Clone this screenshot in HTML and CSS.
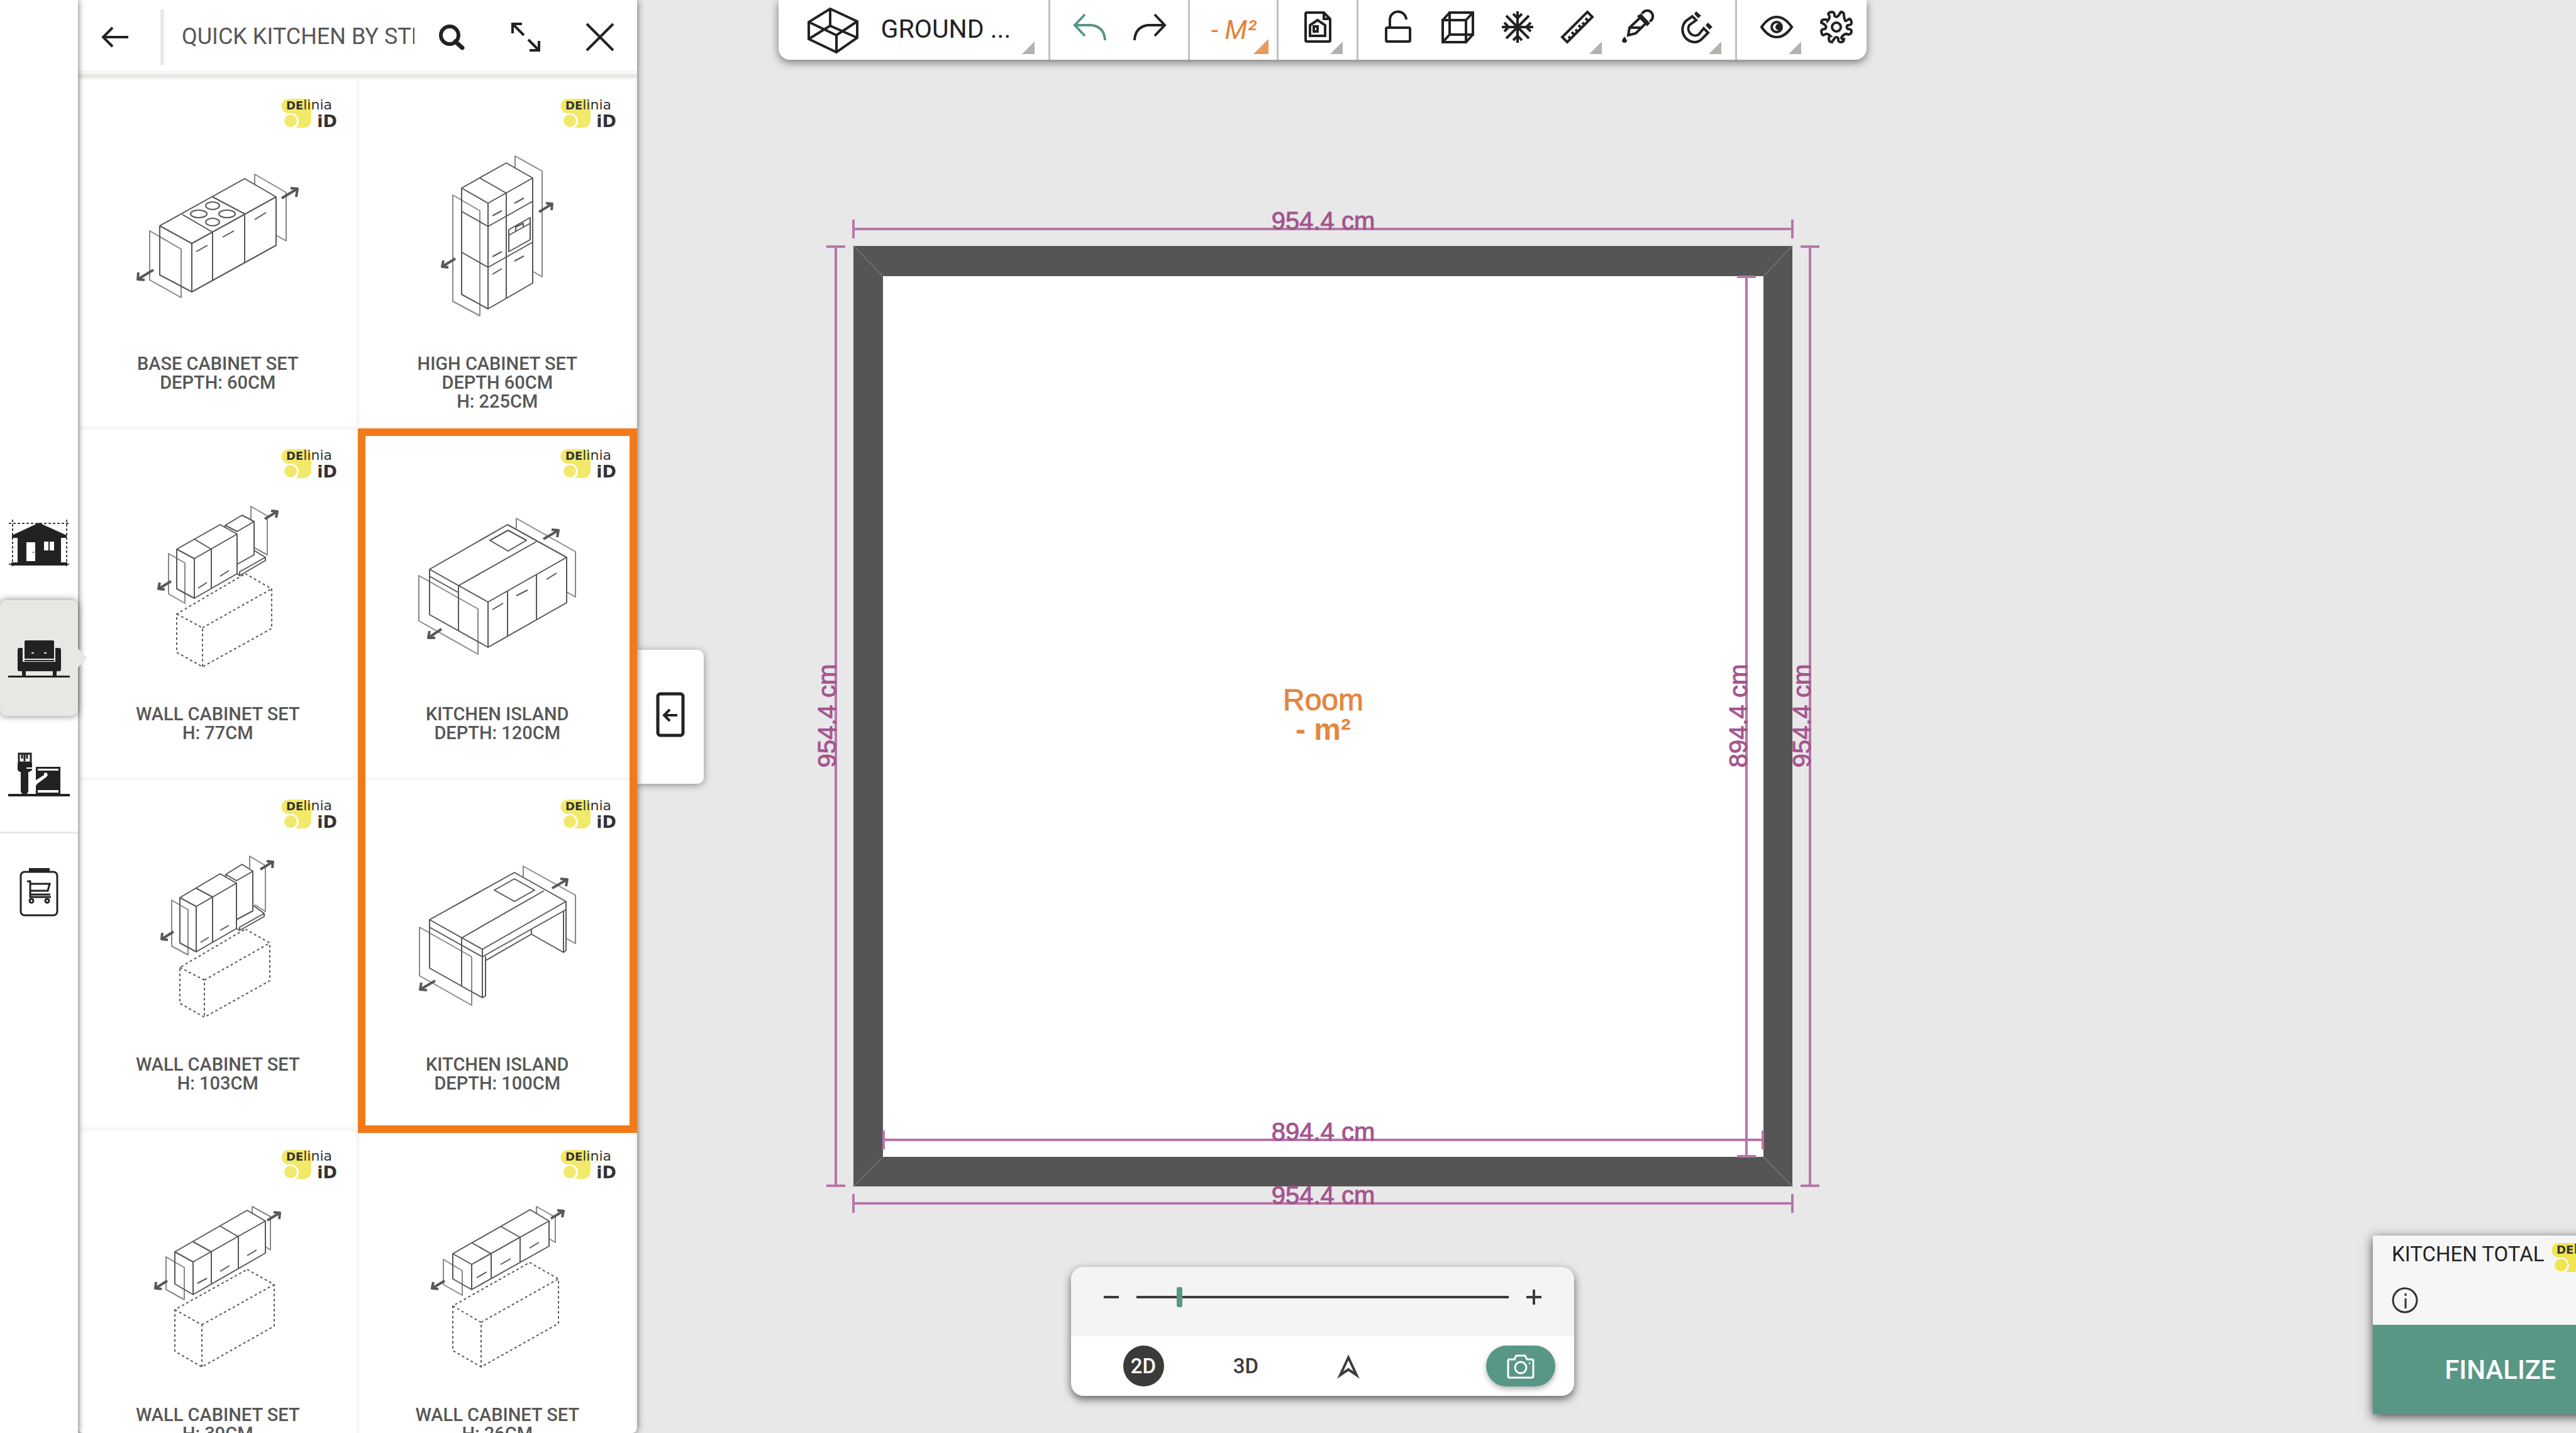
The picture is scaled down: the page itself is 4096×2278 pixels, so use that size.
FILE: index.html
```html
<!DOCTYPE html>
<html lang="en">
<head>
    <meta charset="UTF-8">
    <meta name="viewport" content="width=device-width, initial-scale=1.0">
    <title>Kitchen Planner</title>
    <link rel="stylesheet" href="styles.css">
</head>
<body>

    <nav class="rail">
        <button class="rail-button" aria-label="Build">
            <svg width="124" height="184" viewBox="0 0 124 184">
                <path class="dotted" d="M14 62H110M20 56V132M106 56V132M14 127H20M106 127H110"/>
                <path class="solid" d="M62 61L106 81V85H97V124H107V129H18V124H28V85H19V81Z"/>
                <path class="hole" d="M42 92H56V122H42ZM70 91H77V105H70ZM79 91H86V105H79Z"/>
                <circle class="solid" cx="53" cy="108" r="1"/>
            </svg>
        </button>
        <button class="rail-button active" aria-label="Furnish">
            <svg width="124" height="184" viewBox="0 0 124 184">
                <path class="solid" d="M41 64H84a2 2 0 0 1 2 2V93H39V66a2 2 0 0 1 2-2Z"/>
                <path class="solid" d="M30 76H36V98H88V76H94a3 3 0 0 1 3 3V110a3 3 0 0 1-3 3H90V120H111V123H13V120H35V113H31a3 3 0 0 1-3-3V79a3 3 0 0 1 2-3Z"/>
                <path class="solid" d="M39 95H86V97H39Z"/>
                <path class="cut" d="M41 113H84V120H41ZM39 93H86V95H39ZM50 83h4v2h-4ZM70 83h4v2h-4Z"/>
            </svg>
        </button>
        <button class="rail-button" aria-label="Decorate">
            <svg width="124" height="184" viewBox="0 0 124 184">
                <path class="line" d="M30 60H49V74H30ZM35 61V68M39 61V72M43 61V68"/>
                <path class="solid" d="M28 75H51V82H42V84H51V86L47 89H45V119a6 6 0 0 1-12 0V89H31L28 86Z"/>
                <path class="solid" d="M57 81H96V125H57ZM13 124H111V128H13Z"/>
                <path class="hole" d="M60 84H93V87H60ZM60 118H93V122H60ZM56 103L70 94V91L74 90 76 94 74 97 59 108 56 113Z"/>
            </svg>
        </button>
        <hr class="rail-rule">
        <button class="rail-button" aria-label="Shopping list">
            <svg width="124" height="184" viewBox="0 0 124 184">
                <rect class="line" x="33" y="61" width="58" height="69" rx="6"/>
                <path class="solid" d="M46 55H79V62H46Z"/>
                <path class="line" d="M43 76H48V101H81M48 80H79L76 91H48M48 97H80"/>
                <circle class="line" cx="50" cy="107" r="3"/>
                <circle class="line" cx="75" cy="107" r="3"/>
            </svg>
        </button>
    </nav>

    <aside class="drawer">
        <header class="drawer-header">
            <button class="back-button" aria-label="Back">
                <svg width="44" height="34" viewBox="0 0 44 34"><path class="line" d="M43 17H3M18 2L3 17 18 32"/></svg>
            </button>
            <span class="header-rule"></span>
            <h1>QUICK KITCHEN BY STEPS</h1>
            <button class="header-button" aria-label="Search">
                <svg width="42" height="42" viewBox="0 0 42 42"><circle cx="18" cy="18" r="14" fill="none" stroke="#222" stroke-width="6"/><path d="M27 28L38 38" stroke="#222" stroke-width="7" stroke-linecap="round"/></svg>
            </button>
            <button class="header-button" aria-label="Expand">
                <svg width="46" height="46" viewBox="0 0 46 46"><path class="line" d="M2 17V2H17M2 2L20 20M44 29V44H29M44 44L27 27"/></svg>
            </button>
            <button class="header-button" aria-label="Close">
                <svg width="46" height="46" viewBox="0 0 46 46"><path class="line" d="M2 2L44 44M44 2L2 44"/></svg>
            </button>
        </header>

        <div class="catalog">
            <button class="card">
                <svg class="brand" width="89" height="46" viewBox="0 0 89 46"><path d="M12 0H38a10 10 0 0 1 10 10V34a12 12 0 0 1-12 12H23A13 13 0 0 0 17 23H12A11 11 0 0 1 12 0Z"/><circle cx="15" cy="35" r="10"/><text x="8" y="17"><tspan class="caps">DE</tspan>linia</text><text class="id" x="89" y="45">iD</text></svg>
                <svg class="sketch" width="300" height="300" viewBox="0 0 300 300">
                    <path class="thin" d="M42 143L92 172V249L42 221ZM209 69V53L259 82V159L243 150"/>
                    <path d="M58 135L193 60 243 89V166L109 240 58 213ZM58 135L109 163V240M109 163L243 89M94 117L142 145V223M142 89L193 116V194"/>
                    <ellipse cx="142" cy="103" rx="11" ry="6"/><ellipse cx="120" cy="116" rx="13" ry="6"/><ellipse cx="165" cy="116" rx="13" ry="6"/><ellipse cx="142" cy="129" rx="11" ry="6"/>
                    <path d="M116 176L134 166M158 153L176 143M209 125L227 114"/>
                    <path class="arrow" d="M252 91L277 76M266 75L277 76 275 89M48 205L23 220M24 209L23 220 34 221"/>
                </svg>
                <span class="card-title">BASE CABINET SET<br>DEPTH: 60CM</span>
            </button>

            <button class="card">
                <svg class="brand" width="89" height="46" viewBox="0 0 89 46"><path d="M12 0H38a10 10 0 0 1 10 10V34a12 12 0 0 1-12 12H23A13 13 0 0 0 17 23H12A11 11 0 0 1 12 0Z"/><circle cx="15" cy="35" r="10"/><text x="8" y="17"><tspan class="caps">DE</tspan>linia</text><text class="id" x="89" y="45">iD</text></svg>
                <svg class="sketch" width="300" height="300" viewBox="0 0 300 300">
                    <path class="thin" d="M79 86L122 111V278L79 255ZM178 42V24L221 48V216L207 208"/>
                    <path d="M93 75L164 35 206 59V226L135 267 93 244ZM93 75L135 99V267M135 99L206 59M122 59L164 83V251M93 112L135 136 206 96M93 177L135 201 206 161"/>
                    <path d="M168 141L202 122V157L168 176ZM168 150L202 131M179 143V137L191 131V137"/>
                    <path d="M142 119L157 111M177 99L192 91M142 184L157 176M142 212L157 203M177 191L192 183"/>
                    <path class="arrow" d="M216 113L237 100M227 99L237 100 236 110M83 187L62 200M64 190L62 200 72 201"/>
                </svg>
                <span class="card-title">HIGH CABINET SET<br>DEPTH 60CM<br>H: 225CM</span>
            </button>

            <button class="card">
                <svg class="brand" width="89" height="46" viewBox="0 0 89 46"><path d="M12 0H38a10 10 0 0 1 10 10V34a12 12 0 0 1-12 12H23A13 13 0 0 0 17 23H12A11 11 0 0 1 12 0Z"/><circle cx="15" cy="35" r="10"/><text x="8" y="17"><tspan class="caps">DE</tspan>linia</text><text class="id" x="89" y="45">iD</text></svg>
                <svg class="sketch" width="300" height="300" viewBox="0 0 300 300">
                    <path class="thin" d="M72 99L98 114V178L72 163ZM203 45V24L229 39V101L209 90"/>
                    <path d="M85 92L154 53 181 68V131L113 170 85 155ZM85 92L113 107V170M113 107L181 68M113 76L140 92V154"/>
                    <path d="M162 54L189 38 208 48V101L181 116M162 54V58M162 54L181 64 208 48M208 94L226 105V110L185 134V128L226 105M181 131L185 134"/>
                    <path d="M154 135L168 126M119 154L133 145"/>
                    <path class="dashed" d="M194 131L236 155V218L126 279 85 256V195ZM85 195L126 217V279M126 217L236 155"/>
                    <path class="arrow" d="M225 44L245 32M235 31L245 32 243 42M76 143L56 155M58 145L56 155 66 156"/>
                </svg>
                <span class="card-title">WALL CABINET SET<br>H: 77CM</span>
            </button>

            <button class="card">
                <svg class="brand" width="89" height="46" viewBox="0 0 89 46"><path d="M12 0H38a10 10 0 0 1 10 10V34a12 12 0 0 1-12 12H23A13 13 0 0 0 17 23H12A11 11 0 0 1 12 0Z"/><circle cx="15" cy="35" r="10"/><text x="8" y="17"><tspan class="caps">DE</tspan>linia</text><text class="id" x="89" y="45">iD</text></svg>
                <svg class="sketch" width="300" height="300" viewBox="0 0 300 300">
                    <path class="thin" d="M25 134L119 187V259L25 206ZM180 59V43L274 96V168L260 160"/>
                    <path d="M42 124L166 53 260 105V177L135 248 42 196ZM42 124L135 176V248M135 176L260 105M88 222V150L212 80M42 135L88 161M166 159V230M212 133V204"/>
                    <path d="M138 78L167 62 196 78 167 95ZM142 188L159 178M180 166L198 157M228 140L244 130"/>
                    <path class="arrow" d="M223 76L247 62M236 61L247 62 245 73M61 219L40 233M42 222L40 233 51 233"/>
                </svg>
                <span class="card-title">KITCHEN ISLAND<br>DEPTH: 120CM</span>
            </button>

            <button class="card">
                <svg class="brand" width="89" height="46" viewBox="0 0 89 46"><path d="M12 0H38a10 10 0 0 1 10 10V34a12 12 0 0 1-12 12H23A13 13 0 0 0 17 23H12A11 11 0 0 1 12 0Z"/><circle cx="15" cy="35" r="10"/><text x="8" y="17"><tspan class="caps">DE</tspan>linia</text><text class="id" x="89" y="45">iD</text></svg>
                <svg class="sketch" width="300" height="300" viewBox="0 0 300 300">
                    <path class="thin" d="M77 93L103 108V180L77 166ZM201 42V23L226 38V111L209 100"/>
                    <path d="M90 89L154 51 180 66V138L116 175 90 161ZM90 89L116 103V175M116 103L180 66M116 74L142 88V160"/>
                    <path d="M163 52L189 36 206 47V110L180 124M163 52V56M163 52L180 62 206 47M206 101L224 114V119L185 141V136L224 114M180 138L185 141"/>
                    <path d="M154 141L168 133M123 160L136 152"/>
                    <path class="dashed" d="M194 139L233 161V221L129 279 90 257V200ZM90 200L129 220V279M129 220L233 161"/>
                    <path class="arrow" d="M218 44L238 32M228 31L238 32 237 42M80 143L61 155M62 145L61 155 71 156"/>
                </svg>
                <span class="card-title">WALL CABINET SET<br>H: 103CM</span>
            </button>

            <button class="card">
                <svg class="brand" width="89" height="46" viewBox="0 0 89 46"><path d="M12 0H38a10 10 0 0 1 10 10V34a12 12 0 0 1-12 12H23A13 13 0 0 0 17 23H12A11 11 0 0 1 12 0Z"/><circle cx="15" cy="35" r="10"/><text x="8" y="17"><tspan class="caps">DE</tspan>linia</text><text class="id" x="89" y="45">iD</text></svg>
                <svg class="sketch" width="300" height="300" viewBox="0 0 300 300">
                    <path class="thin" d="M26 136L109 183V260L26 213ZM191 57V39L274 85V162L260 154"/>
                    <path d="M42 124L177 49 259 95 126 171ZM93 230V153L224 78M42 136L126 183 259 108M42 124V201L126 248V171M126 248L131 245V182"/>
                    <path d="M259 95V173L255 176V110M255 176L204 147V140M131 189L204 147M145 77L177 59 209 77 177 95Z"/>
                    <path class="arrow" d="M237 74L261 60M250 59L261 60 259 71M51 221L27 235M29 224L27 235 38 236"/>
                </svg>
                <span class="card-title">KITCHEN ISLAND<br>DEPTH: 100CM</span>
            </button>

            <button class="card">
                <svg class="brand" width="89" height="46" viewBox="0 0 89 46"><path d="M12 0H38a10 10 0 0 1 10 10V34a12 12 0 0 1-12 12H23A13 13 0 0 0 17 23H12A11 11 0 0 1 12 0Z"/><circle cx="15" cy="35" r="10"/><text x="8" y="17"><tspan class="caps">DE</tspan>linia</text><text class="id" x="89" y="45">iD</text></svg>
                <svg class="sketch" width="300" height="300" viewBox="0 0 300 300">
                    <path class="thin" d="M68 103L97 120V171L68 155ZM205 35V23L234 39V92L226 87"/>
                    <path d="M82 95L197 29 226 46V97L111 163 82 146ZM82 95L111 111V163M111 111L226 46M111 79L140 95V146M154 54L183 71V122"/>
                    <path d="M118 145L133 137M154 126L169 117M197 101L212 92"/>
                    <path class="dashed" d="M197 123L240 147V213L125 278 82 253V187ZM82 187L125 211V278M125 211L240 147"/>
                    <path class="arrow" d="M229 45L249 33M239 32L249 33 248 43M70 141L51 153M52 143L51 153 61 154"/>
                </svg>
                <span class="card-title">WALL CABINET SET<br>H: 39CM</span>
            </button>

            <button class="card">
                <svg class="brand" width="89" height="46" viewBox="0 0 89 46"><path d="M12 0H38a10 10 0 0 1 10 10V34a12 12 0 0 1-12 12H23A13 13 0 0 0 17 23H12A11 11 0 0 1 12 0Z"/><circle cx="15" cy="35" r="10"/><text x="8" y="17"><tspan class="caps">DE</tspan>linia</text><text class="id" x="89" y="45">iD</text></svg>
                <svg class="sketch" width="300" height="300" viewBox="0 0 300 300">
                    <path class="thin" d="M64 107L94 125V164L64 147ZM212 35V23L242 40V80L232 74"/>
                    <path d="M79 98L202 28 232 46V86L109 155 79 138ZM79 98L109 115V155M109 115L232 46M110 81L140 98V137M156 55L186 72V111"/>
                    <path d="M117 136L133 127M155 115L171 106M201 89L216 80"/>
                    <path class="dashed" d="M201 112L247 138V209L124 278 79 252V181ZM79 181L124 207V278M124 207L247 138"/>
                    <path class="arrow" d="M235 42L255 30M245 29L255 30 253 40M66 141L46 153M48 143L46 153 56 154"/>
                </svg>
                <span class="card-title">WALL CABINET SET<br>H: 26CM</span>
            </button>

            <div class="highlight"></div>
        </div>
    </aside>

    <button class="collapse-tab" aria-label="Collapse panel">
        <svg width="46" height="72" viewBox="0 0 46 72"><rect x="3" y="3" width="40" height="66" rx="4" fill="none" stroke="#222" stroke-width="5"/><path d="M34 37H13M22 28L13 37 22 46" fill="none" stroke="#222" stroke-width="4"/></svg>
    </button>

    <main class="workspace">
        <div class="toolbar">
            <div class="tool-group">
                <button class="tool level">
                    <svg width="90" height="84" viewBox="0 0 90 84"><path class="line" d="M40 10L83 30V56L50 79 6 58V31ZM40 10V37L6 58M40 37L83 56M6 31L50 52 83 30M50 52V79"/></svg>
                    <span>GROUND ...</span>
                    <i class="corner"></i>
                </button>
            </div>
            <div class="tool-group">
                <button class="tool undo" aria-label="Undo">
                    <svg width="54" height="44" viewBox="0 0 54 44"><path class="line" d="M19 2L3 19 19 36M3 19H30Q50 22 51 43"/></svg>
                </button>
                <button class="tool" aria-label="Redo">
                    <svg width="54" height="44" viewBox="0 0 54 44"><path class="line" d="M35 2L51 19 35 36M51 19H24Q4 22 3 43"/></svg>
                </button>
            </div>
            <div class="tool-group">
                <button class="tool area">
                    <span>- M²</span>
                    <i class="corner"></i>
                </button>
            </div>
            <div class="tool-group">
                <button class="tool" aria-label="Plans">
                    <svg width="50" height="50" viewBox="0 0 50 50"><path class="line" d="M7 2H34L44 12V46a2 2 0 0 1-2 2H7a2 2 0 0 1-2-2V4a2 2 0 0 1 2-2ZM34 2V12H44M12 22L24 14 36 22V39H12ZM18 24H24V32H18Z"/></svg>
                    <i class="corner"></i>
                </button>
            </div>
            <div class="tool-group">
                <button class="tool" aria-label="Lock">
                    <svg width="50" height="50" viewBox="0 0 50 50"><path class="line" d="M8 26H42a2 2 0 0 1 2 2V46a2 2 0 0 1-2 2H8a2 2 0 0 1-2-2V28a2 2 0 0 1 2-2ZM12 26V14A13 13 0 0 1 38 13"/></svg>
                </button>
                <button class="tool" aria-label="Volume">
                    <svg width="50" height="50" viewBox="0 0 50 50"><path class="line" d="M1 14H38V49H1ZM12 2H49V37H12ZM1 14L12 2M38 14L49 2M1 49L12 37M38 49L49 37"/></svg>
                </button>
                <button class="tool" aria-label="Freeze">
                    <svg width="50" height="50" viewBox="0 0 50 50"><path class="line" d="M25 0V50M0 25H50M7 7L43 43M43 7L7 43M18 4L25 11 32 4M18 46L25 39 32 46M4 18L11 25 4 32M46 18L39 25 46 32"/></svg>
                </button>
                <button class="tool" aria-label="Measure">
                    <svg width="50" height="50" viewBox="0 0 50 50"><path class="line" d="M41 1L49 9 9 49 1 41ZM14 43L11 40M20 37L16 33M25 32L22 29M31 26L27 22M36 21L33 18M42 15L38 11"/></svg>
                    <i class="corner"></i>
                </button>
                <button class="tool" aria-label="Pick material">
                    <svg width="50" height="50" viewBox="0 0 50 50"><path class="line" d="M33 4A9 9 0 1 1 45 16M28 8L31 6 43 19 41 21ZM29 11L13 26 11 38 23 35 38 20M13 26H32"/><path class="solid" d="M5 40L9 46A4 4 0 1 1 1 46Z"/></svg>
                </button>
                <button class="tool" aria-label="Snap">
                    <svg width="50" height="50" viewBox="0 0 50 50"><path class="line" d="M18 8L8 15A20 20 0 0 0 21 49Q28 49 33 44L43 34 36 27 28 37A11 11 0 0 1 13 22L24 14Z"/><path class="solid" d="M24 0L32 7 27 11 21 4ZM43 18L50 25 45 29 39 22Z"/></svg>
                    <i class="corner"></i>
                </button>
            </div>
            <div class="tool-group">
                <button class="tool" aria-label="View">
                    <svg width="54" height="50" viewBox="0 0 54 50"><path class="line" d="M3 25Q14 9 27 9T51 25Q40 41 27 41T3 25Z"/><circle class="line" cx="27" cy="25" r="8"/><circle class="solid" cx="30" cy="25" r="5"/></svg>
                    <i class="corner"></i>
                </button>
                <button class="tool" aria-label="Settings">
                    <svg width="52" height="52" viewBox="-26 -26 52 52"><circle class="line" r="7"/><path class="line" d="M18 3Q24 3 24 7T19 12Q15 9 10 14T12 19Q12 24 7 24T3 18Q0 14-3 18T-7 24Q-12 24-12 19T-10 14Q-15 9-19 12T-24 7Q-24 3-18 3 -15 0-18-3T-24-7Q-24-12-19-12T-14-10Q-9-15-12-19T-7-24Q-3-24-3-18 0-14 3-18T7-24Q12-24 12-19T14-10Q15-9 19-12T24-7Q24-3 18-3 15 0 18 3Z"/></svg>
                </button>
            </div>
        </div>

        <svg class="room" width="1600" height="1600" viewBox="0 0 1600 1600">
            <path class="wall" d="M54 52H1547V1547H54Z"/>
            <path class="floor" d="M101 100H1501V1500H101Z"/>
            <path class="miter" d="M54 52L101 100M1547 52L1501 100M54 1547L101 1500M1547 1547L1501 1500"/>
            <path class="dim" d="M54 25H1547M54 10V40M1547 10V40"/>
            <path class="dim" d="M54 1574H1547M54 1559V1589M1547 1559V1589"/>
            <path class="dim" d="M26 52V1547M11 53H41M11 1546H41"/>
            <path class="dim" d="M1575 52V1547M1560 53H1590M1560 1546H1590"/>
            <path class="dim" d="M102 1473H1500M102 1458V1488M1500 1458V1488"/>
            <path class="dim" d="M1474 101V1499M1459 101H1489M1459 1499H1489"/>
            <text class="dim-text" x="801" y="26">954.4 cm</text>
            <text class="dim-text" x="801" y="1575">954.4 cm</text>
            <text class="dim-text" x="801" y="1474">894.4 cm</text>
            <text class="dim-text" transform="translate(26 799) rotate(-90)">954.4 cm</text>
            <text class="dim-text" transform="translate(1475 799) rotate(-90)">894.4 cm</text>
            <text class="dim-text" transform="translate(1576 799) rotate(-90)">954.4 cm</text>
            <text class="room-name" x="801" y="790">Room</text>
            <text class="room-area" x="801" y="837">- m²</text>
        </svg>

        <div class="view-panel">
            <div class="zoom-row">
                <button aria-label="Zoom out"><svg width="24" height="24" viewBox="0 0 24 24"><path d="M0 12H24"/></svg></button>
                <input type="range" min="0" max="100" value="11" aria-label="Zoom">
                <button aria-label="Zoom in"><svg width="24" height="24" viewBox="0 0 24 24"><path d="M0 12H24M12 0V24"/></svg></button>
            </div>
            <div class="mode-row">
                <button class="mode current">2D</button>
                <button class="mode">3D</button>
                <button class="mode" aria-label="First person view">
                    <svg width="32" height="34" viewBox="0 0 32 34"><path d="M16 3L3 31 16 22 29 31Z"/></svg>
                </button>
                <button class="camera" aria-label="Take a picture">
                    <svg width="46" height="42" viewBox="0 0 46 42"><path d="M5 10H13L16 4H30L33 10H41a2 2 0 0 1 2 2V37a2 2 0 0 1-2 2H5a2 2 0 0 1-2-2V12a2 2 0 0 1 2-2Z"/><circle cx="23" cy="23" r="9"/><path d="M36 16H38"/></svg>
                </button>
            </div>
        </div>

        <section class="total">
            <div class="total-info">
                <div class="total-label">
                    <span>KITCHEN TOTAL</span>
                    <svg class="brand" width="89" height="46" viewBox="0 0 89 46"><path d="M12 0H38a10 10 0 0 1 10 10V34a12 12 0 0 1-12 12H23A13 13 0 0 0 17 23H12A11 11 0 0 1 12 0Z"/><circle cx="15" cy="35" r="10"/><text x="8" y="17"><tspan class="caps">DE</tspan>linia</text><text class="id" x="89" y="45">iD</text></svg>
                </div>
                <button class="info" aria-label="Details">
                    <svg width="42" height="42" viewBox="0 0 42 42"><circle cx="21" cy="21" r="19"/><path d="M22 10V14M22 18V34"/></svg>
                </button>
            </div>
            <button class="finalize">FINALIZE</button>
        </section>
    </main>

</body>
</html>
```
FILE: styles.css
```css
* {
    box-sizing: border-box;
}

body {
    margin: 0;
    height: 100vh;
    overflow: hidden;
    display: grid;
    grid-template-columns: 124px 889px 1fr;
    grid-template-rows: 100vh;
    font-family: Roboto, sans-serif;
    color: #222;
    background-color: #e8e8e8;
}

button {
    padding: 0;
    border: none;
    background: none;
    font-family: inherit;
    color: inherit;
    display: flex;
    align-items: center;
    justify-content: center;
    cursor: pointer;
}

svg {
    overflow: visible;
}

.line {
    fill: none;
    stroke: #222;
    stroke-width: 4;
}

.solid {
    fill: #222;
}

/* left rail */

.rail {
    grid-column: 1;
    grid-row: 1;
    z-index: 3;
    display: flex;
    flex-direction: column;
    justify-content: center;
    background-color: white;
    box-shadow: 0 0 10px rgba(0, 0, 0, 0.6);
}

.rail-button {
    height: 184px;
    position: relative;
}

.rail-button.active {
    background-color: #e7e8e3;
    border-radius: 10px;
    box-shadow: 0 0 12px rgba(0, 0, 0, 0.5);
}

.rail-button.active::after {
    content: "";
    position: absolute;
    left: 100%;
    top: 77px;
    border: 15px solid transparent;
    border-left-color: #e7e8e3;
    border-right: none;
}

.rail-rule {
    width: 100%;
    height: 3px;
    margin: 0;
    border: none;
    background-color: #e7e8e3;
}

.rail .line {
    stroke-width: 3;
}

.rail .dotted {
    fill: none;
    stroke: #444;
    stroke-width: 2;
    stroke-dasharray: 4 3;
}

.rail .hole {
    fill: white;
}

.rail .cut {
    fill: #e7e8e3;
}

/* catalog drawer */

.drawer {
    grid-column: 2;
    grid-row: 1;
    z-index: 2;
    overflow: hidden;
    background-color: white;
    border-radius: 0 0 8px 8px;
    box-shadow: 0 0 12px rgba(0, 0, 0, 0.6);
}

.drawer-header {
    height: 124px;
    padding-left: 18px;
    display: flex;
    align-items: center;
    border-bottom: 6px solid #e7e8e3;
    box-shadow: inset 0 -6px #f6f6f5;
}

.back-button {
    width: 82px;
    height: 88px;
}

.header-rule {
    width: 6px;
    height: 88px;
    margin: 0 28px 0 31px;
    background-color: #e7e8e3;
}

h1 {
    flex: 1;
    margin: 0 0 2px;
    overflow: hidden;
    white-space: nowrap;
    font-size: 36px;
    font-weight: 400;
    color: #575756;
}

.header-button {
    width: 118px;
    height: 88px;
}

.catalog {
    display: grid;
    grid-template-columns: 1fr 1fr;
    grid-auto-rows: 557px;
}

.card {
    flex-direction: column;
    justify-content: flex-start;
    padding-top: 30px;
    border: 3px solid #f7f7f7;
    color: #575756;
}

.card .brand {
    align-self: flex-end;
    margin-right: 30px;
}

.brand {
    flex: none;
    fill: #f1e96a;
}

.brand text {
    fill: #333;
    font-family: "DejaVu Sans", sans-serif;
    font-size: 22px;
    font-weight: 400;
    line-height: 22px;
}

.brand .caps {
    font-size: 18px;
    font-weight: 700;
}

.brand .id {
    font-size: 27px;
    font-weight: 700;
    text-anchor: end;
}

.sketch {
    margin: 21px 0 39px;
    fill: none;
    stroke: #575756;
    stroke-width: 2;
    stroke-linejoin: round;
}

.sketch .thin {
    stroke: #888;
}

.sketch .dashed {
    stroke-dasharray: 4 4;
}

.sketch .arrow {
    stroke-width: 4;
}

.card-title {
    font-size: 29px;
    line-height: 30px;
    font-weight: 500;
}

.highlight {
    grid-column: 2;
    grid-row: 2 / 4;
    margin-bottom: -6px;
    border: 12px solid #f27a18;
    z-index: 1;
    pointer-events: none;
}

.card:nth-child(1), .card:nth-child(3), .card:nth-child(5), .card:nth-child(7) {
    grid-column: 1;
}

.card:nth-child(2), .card:nth-child(4), .card:nth-child(6), .card:nth-child(8) {
    grid-column: 2;
}

.card:nth-child(-n+2) {
    grid-row: 1;
}

.card:nth-child(3), .card:nth-child(4) {
    grid-row: 2;
}

.card:nth-child(5), .card:nth-child(6) {
    grid-row: 3;
}

.card:nth-child(7), .card:nth-child(8) {
    grid-row: 4;
}

.collapse-tab {
    grid-column: 3;
    grid-row: 1;
    align-self: center;
    justify-self: start;
    z-index: 1;
    width: 106px;
    height: 213px;
    padding-bottom: 6px;
    background-color: white;
    border-radius: 0 10px 10px 0;
    box-shadow: 0 2px 12px rgba(0, 0, 0, 0.4);
}

/* workspace */

.workspace {
    grid-column: 2 / 4;
    grid-row: 1;
    display: grid;
    grid-template-rows: 100vh;
    justify-items: center;
    padding-right: 15px;
    overflow: hidden;
}

.workspace > * {
    grid-column: 1;
    grid-row: 1;
}

.toolbar {
    align-self: start;
    z-index: 1;
    height: 95px;
    display: flex;
    background-color: white;
    border-radius: 0 0 18px 18px;
    box-shadow: 0 4px 14px rgba(0, 0, 0, 0.5);
}

.tool-group {
    display: flex;
    padding: 0 13px 0 16px;
    border-right: 3px solid #c0c0c0;
}

.tool-group:last-child {
    padding-right: 0;
    border-right: none;
}

.tool {
    position: relative;
    width: 95px;
    height: 95px;
    padding-bottom: 9px;
}

.tool.level {
    width: 400px;
    justify-content: flex-start;
    padding: 0 0 4px 26px;
    gap: 31px;
    font-size: 41px;
}

.tool.undo .line {
    stroke: #589785;
}

.tool.area {
    width: 109px;
    padding-bottom: 0;
    font-size: 42px;
    font-style: italic;
    color: #e1833a;
}

.corner {
    position: absolute;
    right: 9px;
    bottom: 9px;
    border: 10px solid #b1b3ae;
    border-left-color: transparent;
    border-top-color: transparent;
}

.area .corner {
    border-width: 12px;
    border-right-color: #e8995c;
    border-bottom-color: #e8995c;
    right: 0;
}

.room {
    align-self: center;
}

.wall {
    fill: #555;
}

.floor {
    fill: white;
}

.miter {
    stroke: #6d6d6d;
    stroke-width: 2;
}

.dim {
    fill: none;
    stroke: #b577a8;
    stroke-width: 4;
}

.dim-text, .room-name, .room-area {
    font-family: "Liberation Sans", Arial, sans-serif;
    text-anchor: middle;
}

.dim-text {
    font-size: 40px;
    fill: #a4558f;
    stroke: #a4558f;
    stroke-width: 1;
}

.room-name, .room-area {
    font-size: 48px;
    fill: #e3873f;
}

.room-name {
    stroke: #e3873f;
    stroke-width: 1;
}

.room-area {
    font-weight: 700;
}

.view-panel {
    align-self: end;
    z-index: 1;
    width: 800px;
    margin-bottom: 59px;
    overflow: hidden;
    border-radius: 20px;
    background-color: white;
    box-shadow: 0 5px 14px rgba(0, 0, 0, 0.6);
}

.zoom-row {
    height: 110px;
    padding: 0 52px 14px;
    display: flex;
    align-items: center;
    gap: 28px;
    background-color: #f4f4f4;
}

.zoom-row svg {
    stroke: #3c3c3a;
    stroke-width: 4;
}

.zoom-row input {
    flex: 1;
    height: 32px;
    margin: 0;
    appearance: none;
    background: linear-gradient(#3c3c3a, #3c3c3a) center / 100% 4px no-repeat;
}

.zoom-row input::-webkit-slider-thumb {
    appearance: none;
    width: 9px;
    height: 32px;
    border-radius: 3px;
    background-color: #589785;
}

.mode-row {
    height: 95px;
    padding: 0 30px 0 83px;
    display: flex;
    align-items: center;
    gap: 98px;
}

.mode {
    width: 65px;
    height: 65px;
    border-radius: 50%;
    font-size: 33px;
    font-weight: 500;
    color: #3c3c3a;
}

.mode.current {
    background-color: #3c3a38;
    color: white;
}

.mode path {
    fill: none;
    stroke: #3c3c3a;
    stroke-width: 4;
}

.camera {
    width: 110px;
    height: 65px;
    margin-left: auto;
    border-radius: 33px;
    background-color: #589785;
    box-shadow: 0 4px 8px rgba(0, 0, 0, 0.3);
}

.camera svg {
    fill: none;
    stroke: white;
    stroke-width: 3;
}

/* runs past the right edge of the window */
.total {
    align-self: end;
    justify-self: end;
    width: 405px;
    margin: 0 -97px 30px 0;
    background-color: #f6f6f6;
    box-shadow: 0 4px 16px rgba(0, 0, 0, 0.7);
}

.total-info {
    height: 142px;
    padding: 12px 32px 0 30px;
}

.total-label {
    display: flex;
    justify-content: space-between;
    font-size: 33px;
    line-height: 36px;
}

.total .brand {
    fill: #eee54f;
}

.info {
    margin-top: 24px;
}

.info svg {
    fill: none;
    stroke: #333;
    stroke-width: 3;
}

.finalize {
    width: 100%;
    height: 142px;
    background-color: #589785;
    color: white;
    font-size: 42px;
    font-weight: 500;
}
```
